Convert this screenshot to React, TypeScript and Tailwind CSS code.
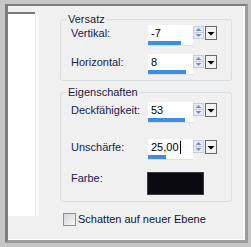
import React from "react";

function Arrows() {
  return (
    <svg width="11" height="13" viewBox="0 0 11 13" className="block">
      <rect x="0.5" y="0.5" width="10" height="12" fill="#e8ebf2" stroke="#c5ccda" />
      <line x1="1" y1="6.5" x2="10" y2="6.5" stroke="#c5ccda" />
      <path d="M2.5 5 L5.5 2 L8.5 5 Z" fill="#7b8cc2" />
      <path d="M2.5 8 L5.5 11 L8.5 8 Z" fill="#7b8cc2" />
    </svg>
  );
}

function Drop() {
  return (
    <svg width="12" height="14" viewBox="0 0 12 14" className="block">
      <rect x="0.5" y="0.5" width="11" height="13" fill="#f2f2f2" stroke="#6a6a6a" />
      <path d="M2.5 6 L9.5 6 L6 9.5 Z" fill="#000" />
    </svg>
  );
}

function Spin({ value, bar, cursor }: { value: string; bar: string; cursor?: boolean }) {
  return (
    <div className="flex items-start">
      <div className="w-[45px] h-[21px] bg-white border-b border-[#e0e0e0] flex flex-col">
        <div className="h-[16px] leading-[17px] pl-[3px] text-black flex items-start">
          <span>{value}</span>
          {cursor && <span className="inline-block w-px h-[13px] bg-black mt-[2px] ml-px" />}
        </div>
        <div className={`h-[4px] bg-[#3a8ee8] ${bar}`} />
      </div>
      <div className="mt-[1px]">
        <Arrows />
      </div>
      <div className="mt-[1px] ml-[1px]">
        <Drop />
      </div>
    </div>
  );
}

function Row({ label, children }: { label: string; children: React.ReactNode }) {
  return (
    <div className="flex items-start h-[21px] ml-[4px]">
      <div className="w-[77px] leading-[17px] text-[#16205a]">{label}</div>
      {children}
    </div>
  );
}

export default function App() {
  return (
    <div
      className="w-[251px] h-[247px] bg-[#c6c6c6] pl-[5px] pt-[4px] text-[11px]"
      style={{ fontFamily: '"Liberation Sans", Arial, sans-serif' }}
    >
      <div className="w-[243px] h-[239px] border-l-[3px] border-t-[2px] border-r-[3px] border-b-[3px] border-l-[#7c7c7c] border-t-[#7c7c7c] border-r-[#9c9c9c] border-b-[#9c9c9c]">
        <div className="w-[237px] h-[234px] bg-[#f0f0f0] border-r border-b border-white flex">
          <div className="flex mt-[6px] h-[204px]">
            <div className="w-[27px] h-full bg-white border-t-2 border-[#7a7a7a]" />
            <div className="w-[4px] h-full bg-[#f8f8f8] border-l border-[#e8e8e8]" />
          </div>
          <div className="ml-[21px] mt-[6px] flex flex-col">
            <fieldset className="w-[172px] border border-[#d5dde3] rounded-[3px] pl-[6px] pb-[5px] m-0">
              <legend className="px-[1px] leading-[14px] text-[#1a1a40]">Versatz</legend>
              <div className="mt-[-1px]">
                <Row label="Vertikal:">
                  <Spin value="-7" bar="w-[33px]" />
                </Row>
                <div className="h-[8px]" />
                <Row label="Horizontal:">
                  <Spin value="8" bar="w-[38px]" />
                </Row>
              </div>
            </fieldset>
            <fieldset className="w-[172px] mt-[4px] border border-[#d5dde3] rounded-[3px] pl-[6px] pb-[6px] m-0">
              <legend className="px-[1px] leading-[14px] text-[#1a1a40]">Eigenschaften</legend>
              <div className="mt-[3px]">
                <Row label="Deckfähigkeit:">
                  <Spin value="53" bar="w-[37px]" />
                </Row>
                <div className="h-[16px]" />
                <Row label="Unschärfe:">
                  <Spin value="25,00" bar="w-[18px]" cursor />
                </Row>
                <div className="flex items-start ml-[4px] mt-[10px]">
                  <div className="w-[77px] leading-[17px] text-[#16205a]">Farbe:</div>
                  <div className="w-[57px] h-[23px] mt-[2px] -ml-[1px] bg-[#0a0a10] border border-[#3a3a40]" />
                </div>
              </div>
            </fieldset>
            <div className="flex items-center ml-[3px] mt-[10px]">
              <div className="w-[13px] h-[13px] border border-[#8e8f8f] bg-gradient-to-br from-[#d4d4d4] to-[#f8f8f8]" />
              <span className="ml-[2px] text-[#101038] leading-[14px]">Schatten auf neuer Ebene</span>
            </div>
          </div>
        </div>
      </div>
    </div>
  );
}
